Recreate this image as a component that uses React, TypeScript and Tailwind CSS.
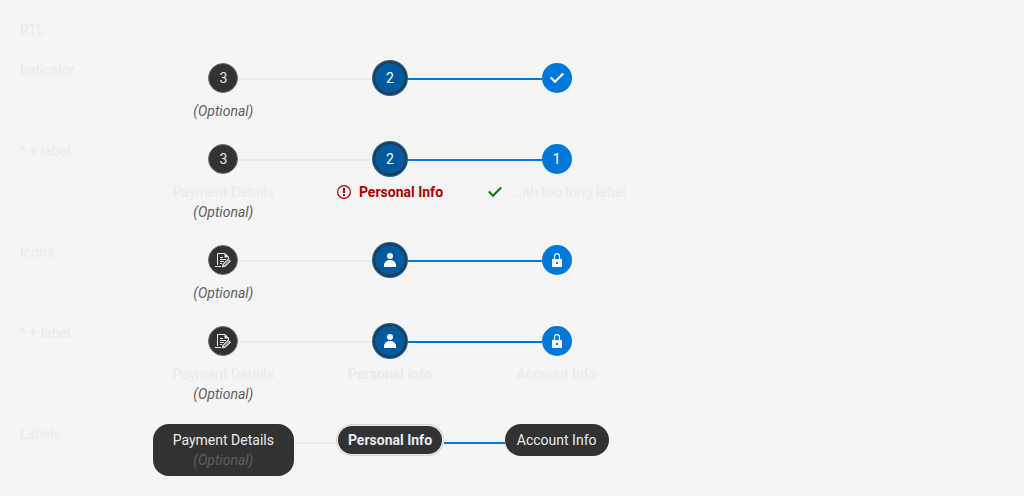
import React from "react";
import clsx from "clsx";

type IconName = "note" | "user" | "lock" | "check";

interface Step {
  text?: string;
  icon?: IconName;
  label?: string;
  align?: "center" | "between";
  status?: "error" | "valid";
  optional?: boolean;
}

const CheckIcon = ({ className }: { className?: string }) => (
  <svg viewBox="0 0 14 14" className={clsx("size-3.5 shrink-0", className)} fill="none" stroke="currentColor" strokeWidth="2.1" aria-hidden="true">
    <path d="M0.8 6.6 L5 10.8 L13.2 2.6" />
  </svg>
);

const ErrorIcon = () => (
  <svg viewBox="0 0 14 14" className="size-3.5 shrink-0" aria-hidden="true">
    <circle cx="7" cy="7" r="6.4" fill="none" stroke="currentColor" strokeWidth="1.2" />
    <path d="M6 3h2v5H6z M6 9h2v2H6z" fill="currentColor" />
  </svg>
);

const UserIcon = () => (
  <svg viewBox="0 0 14 14" className="size-3.5" fill="currentColor" aria-hidden="true">
    <circle cx="7" cy="3" r="3" />
    <path d="M1 14v-1.6C1 9 3.6 7 7 7s6 2 6 5.4V14z" />
  </svg>
);

const LockIcon = () => (
  <svg viewBox="0 0 14 14" className="size-3.5" aria-hidden="true">
    <path d="M4.5 7V3.5a2.5 2.9 0 0 1 5 0V7" fill="none" stroke="currentColor" strokeWidth="1.1" />
    <path fillRule="evenodd" d="M2 6h10v8H2z M6 9v2h2V9z" fill="currentColor" />
  </svg>
);

const NoteIcon = () => (
  <svg viewBox="0 0 16 16" className="size-4" fill="none" stroke="currentColor" aria-hidden="true">
    <path d="M2.5 13V1.5h7.5l3.5 3.5v2" />
    <path d="M9.5 1v4.5H14z" fill="currentColor" stroke="none" />
    <path d="M5 5.5h3M5 7.5h6M5 9.5h4M5 11.5h2M0 14.5h6" />
    <path d="M7.3 15l.8-3 5.2-5 2.2 2.2-5.2 5z" fill="#b0b0b0" />
    <path d="M9 13.2l4.6-4.4" stroke="#323232" strokeWidth="0.7" />
  </svg>
);

const icons: Record<IconName, React.ReactNode> = {
  note: <NoteIcon />,
  user: <UserIcon />,
  lock: <LockIcon />,
  check: <CheckIcon />,
};

const rows: { title: string; steps: Step[] }[] = [
  {
    title: "Indicator",
    steps: [{ icon: "check" }, { text: "2" }, { text: "3", optional: true }],
  },
  {
    title: "^ + label",
    steps: [
      { text: "1", label: "...ith too long label", status: "valid", align: "between" },
      { text: "2", label: "Personal Info", status: "error" },
      { text: "3", label: "Payment Details", optional: true },
    ],
  },
  {
    title: "Icons",
    steps: [{ icon: "lock" }, { icon: "user" }, { icon: "note", optional: true }],
  },
  {
    title: "^ + label",
    steps: [
      { icon: "lock", label: "Account Info" },
      { icon: "user", label: "Personal Info" },
      { icon: "note", label: "Payment Details", optional: true },
    ],
  },
  {
    title: "Labels",
    steps: [{ label: "Account Info" }, { label: "Personal Info" }, { label: "Payment Details", optional: true }],
  },
];

const Connector = ({ kind }: { kind: "none" | "done" | "todo" }) => (
  <span
    className={clsx(
      "mt-[18px] h-0.5 flex-1",
      kind === "done" && "bg-[#0078d7]",
      kind === "todo" && "bg-[#ebebeb]",
    )}
  />
);

const Indicator = ({ step, index }: { step: Step; index: number }) => (
  <span
    className={clsx(
      "relative flex size-[30px] items-center justify-center rounded-full text-[#ebebeb]",
      index === 0 && "bg-[#0078d7] text-white",
      index === 1 && "bg-[#005a9e] text-white shadow-[0_0_0_1px_#323232,0_0_0_2px_#2b4254,0_0_0_3px_#0f66ab]",
      index === 2 && "border border-[#6e6e6e] bg-[#323232]",
    )}
  >
    {step.icon ? icons[step.icon] : step.text}
  </span>
);

const Pill = ({ step, index }: { step: Step; index: number }) => (
  <span
    className={clsx(
      "flex flex-col items-center rounded-2xl bg-[#323232] text-[#ebebeb]",
      index === 0 && "px-3 py-1.5",
      index === 1 && "m-0.5 px-2.5 py-1 font-bold shadow-[0_0_0_1px_#f0f0f0,0_0_0_2px_#d4d4d4]",
      index === 2 && "px-5 py-1.5",
    )}
  >
    <span>{step.label}</span>
    {step.optional && <span className="italic text-[#605e5c]">(Optional)</span>}
  </span>
);

const StepLabel = ({ step, index }: { step: Step; index: number }) => (
  <span
    className={clsx(
      "flex items-center gap-2 whitespace-nowrap",
      step.status === "error" ? "text-[#a80000]" : "text-[#ebebeb]",
      index === 1 && "font-bold",
      step.align === "between" && "w-[138px] justify-between",
    )}
  >
    {step.status === "error" && <ErrorIcon />}
    {step.status === "valid" && <CheckIcon className="text-[#107c10]" />}
    <span>{step.label}</span>
  </span>
);

const StepItem = ({ step, index }: { step: Step; index: number }) => {
  const hasIndicator = Boolean(step.icon || step.text);
  const before = index === 2 ? "none" : index === 1 ? "todo" : "done";
  const after = index === 0 ? "none" : index === 1 ? "done" : "todo";
  return (
    <li dir="ltr" className="min-w-0 flex-1">
      <button
        type="button"
        aria-label={step.label ?? `Step ${index + 1}`}
        aria-current={index === 1 ? "step" : undefined}
        className="flex w-full flex-col items-center"
      >
        <span className={clsx("flex w-full items-start", hasIndicator && "pt-[3px]")}>
          <span className={clsx("flex flex-1", hasIndicator && "-mt-[3px]")}>
            <Connector kind={before} />
          </span>
          {hasIndicator ? <Indicator step={step} index={index} /> : <Pill step={step} index={index} />}
          <span className={clsx("flex flex-1", hasIndicator && "-mt-[3px]")}>
            <Connector kind={after} />
          </span>
        </span>
        {hasIndicator && (step.label || step.optional) && (
          <span className="mt-2 flex flex-col items-center">
            {step.label && <StepLabel step={step} index={index} />}
            {step.optional && <span className="italic text-[#605e5c]">(Optional)</span>}
          </span>
        )}
      </button>
    </li>
  );
};

export default function App() {
  return (
    <main className="flex min-h-screen flex-col gap-5 bg-[#f5f5f5] p-5 font-['Roboto',sans-serif] text-sm text-[#ebebeb]">
      <h1>RTL</h1>
      {rows.map((row, i) => (
        <section key={i} className="flex">
          <h2 className="w-[120px] shrink-0">{row.title}</h2>
          <ol dir="rtl" className="flex max-w-[500px] flex-1">
            {row.steps.map((step, index) => (
              <StepItem key={index} step={step} index={index} />
            ))}
          </ol>
        </section>
      ))}
    </main>
  );
}
